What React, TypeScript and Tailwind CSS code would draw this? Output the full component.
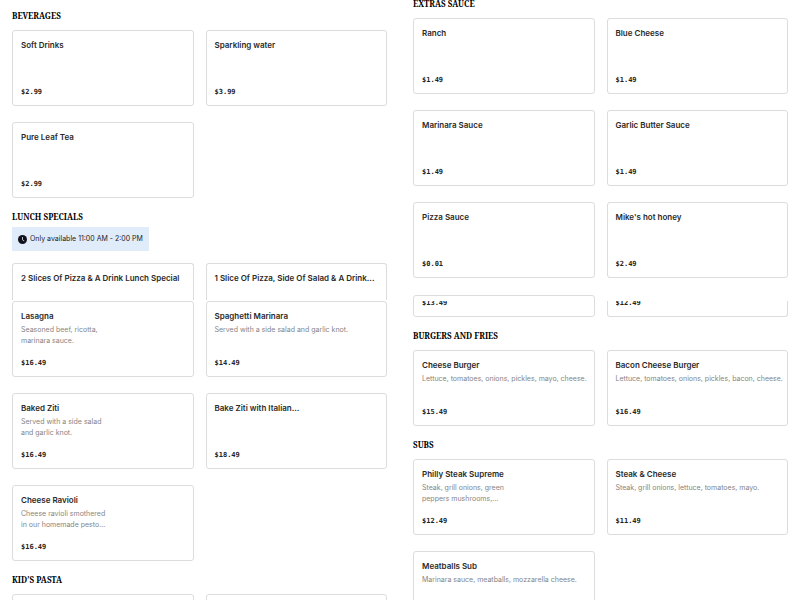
import { clsx } from 'clsx'
import type { ReactNode } from 'react'

type Item = {
  name: string
  price: string
  description?: string
  photo?: boolean
}

const beverages: Item[] = [
  { name: 'Soft Drinks', price: '$2.99' },
  { name: 'Sparkling water', price: '$3.99' },
  { name: 'Pure Leaf Tea', price: '$2.99' },
]

const lunchSpecials = [
  '2 Slices Of Pizza & A Drink Lunch Special',
  '1 Slice Of Pizza, Side Of Salad & A Drink...',
]

const pasta: Item[] = [
  { name: 'Lasagna', price: '$16.49', description: 'Seasoned beef, ricotta, marinara sauce.', photo: true },
  { name: 'Spaghetti Marinara', price: '$14.49', description: 'Served with a side salad and garlic knot.' },
  { name: 'Baked Ziti', price: '$16.49', description: 'Served with a side salad and garlic knot.', photo: true },
  { name: 'Bake Ziti with Italian...', price: '$18.49' },
  { name: 'Cheese Ravioli', price: '$16.49', description: 'Cheese ravioli smothered in our homemade pesto...', photo: true },
]

const sauces: Item[] = [
  { name: 'Ranch', price: '$1.49' },
  { name: 'Blue Cheese', price: '$1.49' },
  { name: 'Marinara Sauce', price: '$1.49' },
  { name: 'Garlic Butter Sauce', price: '$1.49' },
  { name: 'Pizza Sauce', price: '$0.01' },
  { name: "Mike's hot honey", price: '$2.49' },
]

const burgers: Item[] = [
  { name: 'Cheese Burger', price: '$15.49', description: 'Lettuce, tomatoes, onions, pickles, mayo, cheese.' },
  { name: 'Bacon Cheese Burger', price: '$16.49', description: 'Lettuce, tomatoes, onions, pickles, bacon, cheese.' },
]

const subs: Item[] = [
  { name: 'Philly Steak Supreme', price: '$12.49', description: 'Steak, grill onions, green peppers mushrooms,...', photo: true },
  { name: 'Steak & Cheese', price: '$11.49', description: 'Steak, grill onions, lettuce, tomatoes, mayo.' },
  { name: 'Meatballs Sub', price: '$13.49', description: 'Marinara sauce, meatballs, mozzarella cheese.' },
]

function Heading({ children }: { children: ReactNode }) {
  return (
    <h2 className="font-['Noto_Serif','Liberation_Serif',serif] text-[8px] leading-4 font-bold text-black uppercase">
      {children}
    </h2>
  )
}

function Name({ children }: { children: ReactNode }) {
  return <span className="text-[8px] leading-3 font-semibold whitespace-nowrap text-[#2a2a2a]">{children}</span>
}

function Price({ children }: { children: ReactNode }) {
  return (
    <span className="block font-['DejaVu_Sans_Mono',monospace] text-[7px] leading-[10px] font-bold text-[#222]">
      {children}
    </span>
  )
}

function Card({ item }: { item: Item }) {
  return (
    <button
      type="button"
      className="flex min-h-[76px] min-w-0 flex-col items-start rounded-[3px] border border-[#dcdcdc] bg-white p-2 text-left"
    >
      <Name>{item.name}</Name>
      {item.description && (
        <span
          className={clsx(
            'mt-0.5 text-[7px] leading-[11px] text-[#858585]',
            item.photo ? 'max-w-[88px]' : 'whitespace-nowrap'
          )}
        >
          {item.description}
        </span>
      )}
      <span className="mt-auto">
        <Price>{item.price}</Price>
      </span>
    </button>
  )
}

function Grid({ items }: { items: Item[] }) {
  return (
    <div className="grid grid-cols-2 gap-x-3 gap-y-4">
      {items.map(item => (
        <Card key={item.name} item={item} />
      ))}
    </div>
  )
}

function Section({ title, items }: { title: string; items: Item[] }) {
  return (
    <section className="flex flex-col gap-1.5">
      <Heading>{title}</Heading>
      <Grid items={items} />
    </section>
  )
}

function ClockIcon() {
  return (
    <svg viewBox="0 0 16 16" className="size-[9px] shrink-0" aria-hidden="true">
      <circle cx="8" cy="8" r="8" fill="#10131c" />
      <path d="M8 3.5V8.5L11 10.5" fill="none" stroke="#e2edfb" strokeWidth="1.4" />
    </svg>
  )
}

export default function App() {
  return (
    <main className="h-screen overflow-hidden bg-white font-['Inter','Liberation_Sans',sans-serif]">
      <div className="grid grid-cols-2 gap-x-[26px] px-3">
        <div className="flex flex-col gap-[11px] pt-2">
          <Section title="Beverages" items={beverages} />

          <section>
            <Heading>Lunch Specials</Heading>
            <p className="mt-0.5 mb-3 flex h-6 w-fit items-center gap-[3px] bg-[#e1ecfa] px-1.5 text-[7px] text-[#222]">
              <ClockIcon />
              Only available 11:00 AM - 2:00 PM
            </p>
            <div className="mb-px grid grid-cols-2 gap-x-3">
              {lunchSpecials.map(name => (
                <button
                  key={name}
                  type="button"
                  className="flex h-[37px] min-w-0 items-start rounded-t-[3px] border border-b-0 border-[#dcdcdc] p-2 text-left"
                >
                  <Name>{name}</Name>
                </button>
              ))}
            </div>
            <Grid items={pasta} />
          </section>

          <section className="flex flex-col gap-1.5">
            <Heading>Kid’s Pasta</Heading>
            <div className="grid grid-cols-2 gap-x-3">
              <div className="h-19 rounded-[3px] border border-[#dcdcdc]" />
              <div className="h-19 rounded-[3px] border border-[#dcdcdc]" />
            </div>
          </section>
        </div>

        <div className="-mt-1 flex flex-col gap-[11px]">
          <div className="flex flex-col gap-[17px]">
            <Section title="Extras Sauce" items={sauces} />
            {/* row partly scrolled out of view */}
            <div className="grid grid-cols-2 items-end gap-x-3">
              <div className="rounded-[3px] border border-[#dcdcdc] px-2 pt-[5px] pb-2">
                <div className="flex h-[7px] items-end overflow-hidden">
                  <Price>$13.49</Price>
                </div>
              </div>
              <div className="rounded-b-[3px] border border-t-0 border-[#dcdcdc] px-2 pb-2">
                <div className="flex h-[7px] items-end overflow-hidden">
                  <Price>$12.49</Price>
                </div>
              </div>
            </div>
          </div>
          <Section title="Burgers and Fries" items={burgers} />
          <Section title="Subs" items={subs} />
        </div>
      </div>
    </main>
  )
}
